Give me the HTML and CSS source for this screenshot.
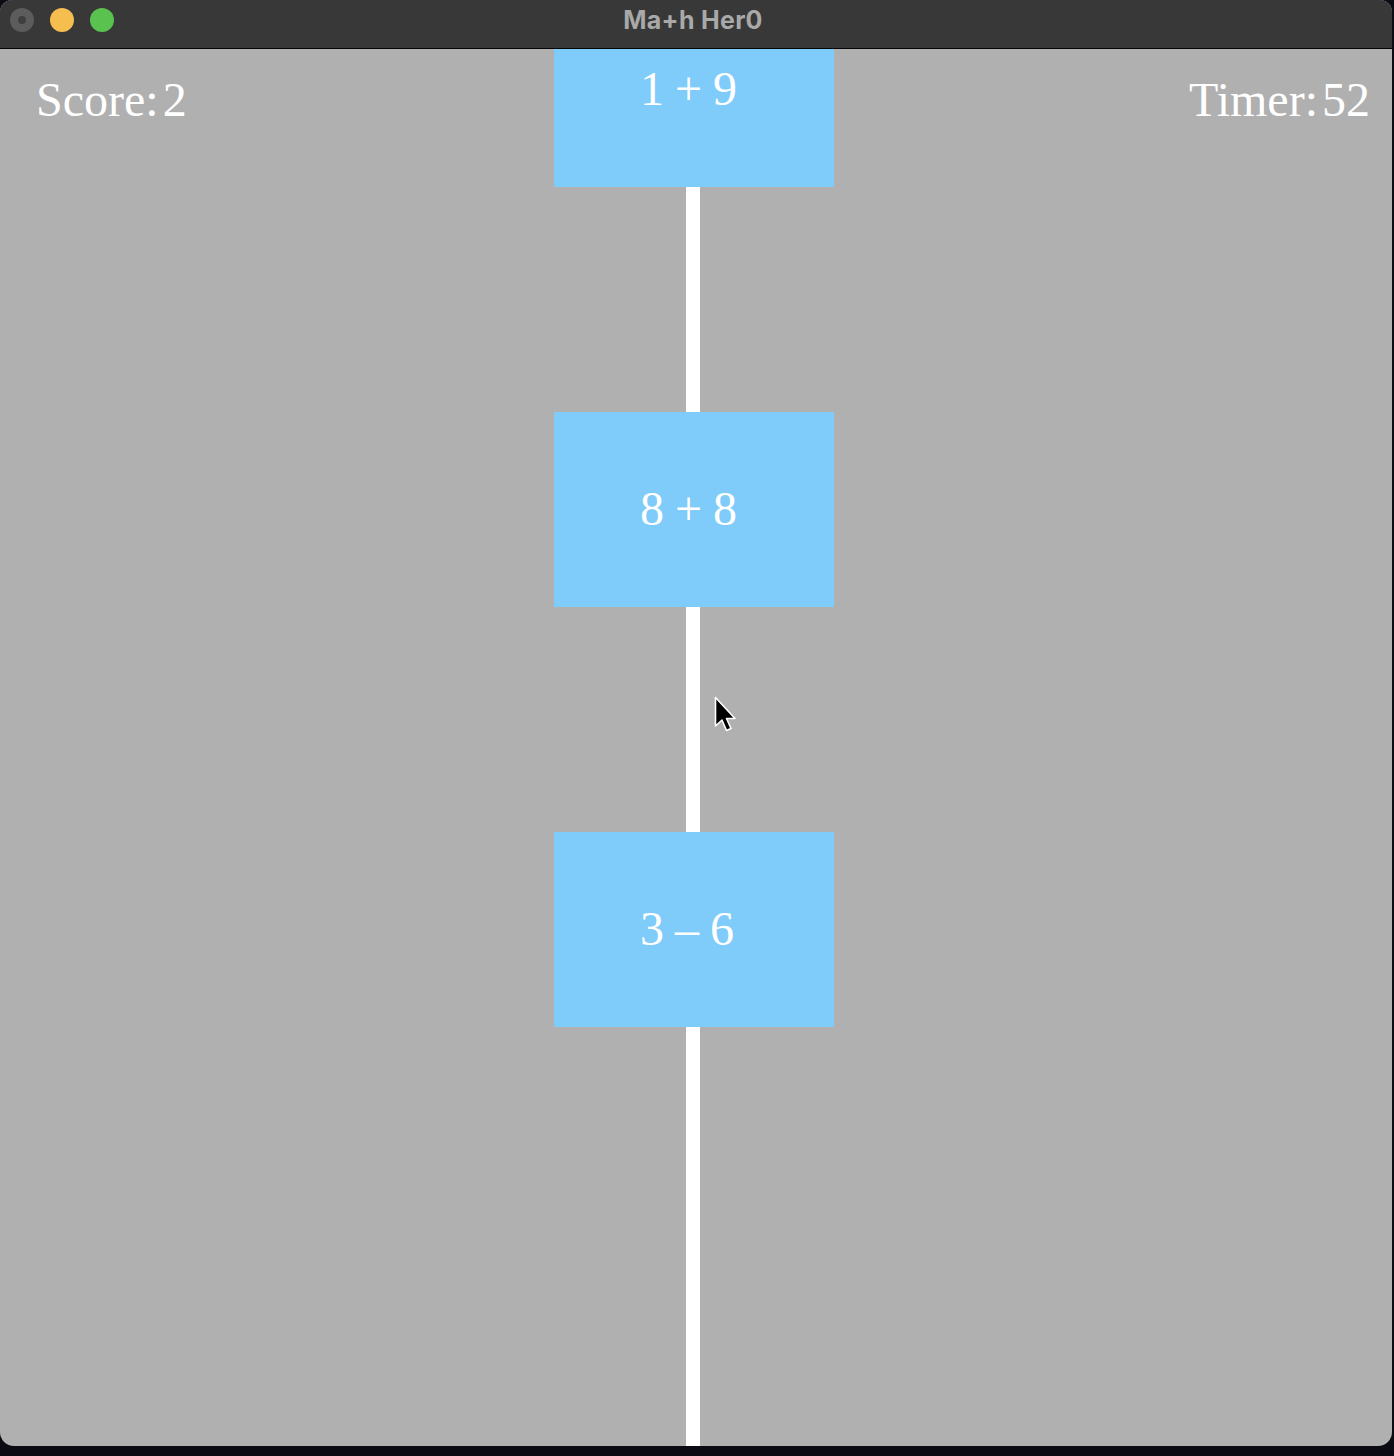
FILE: index.html
```html
<!DOCTYPE html>
<html>
<head>
<meta charset="utf-8">
<title>Ma+h Her0</title>
<link rel="stylesheet" href="styles.css">
</head>
<body>
<div class="window">
  <header class="titlebar">
    <div class="lights">
      <span class="light light-close"><span class="dot"></span></span>
      <span class="light light-min"></span>
      <span class="light light-max"></span>
    </div>
    <div class="title">Ma+h Her0</div>
  </header>
  <main class="canvas">
    <div class="hud hud-left">Score: 2</div>
    <div class="track">
      <div class="box">1 + 9</div>
      <div class="rail"></div>
      <div class="box">8 + 8</div>
      <div class="rail"></div>
      <div class="box">3 – 6</div>
      <div class="rail rail-end"></div>
    </div>
    <div class="hud hud-right">Timer: 52</div>
    <svg class="cursor" width="24" height="38" viewBox="0 0 24 38">
      <path d="M1.5 1.5 L1.5 30 L8 24 L12.5 34.5 L17 32.5 L12.5 22.5 L21 22.5 Z" fill="#000" stroke="#fff" stroke-width="1.6" stroke-linejoin="round"/>
    </svg>
  </main>
</div>
</body>
</html>
```

FILE: styles.css
```css
html, body {
  margin: 0;
  padding: 0;
  background: #0b0b14;
  width: 1394px;
  height: 1456px;
  overflow: hidden;
}

.window {
  width: 1392px;
  height: 1446px;
  display: flex;
  flex-direction: column;
  border-radius: 12px 12px 14px 14px;
  overflow: hidden;
  background: #b0b0b0;
  position: relative;
}

.titlebar {
  height: 48px;
  flex: 0 0 48px;
  background: #383838;
  border-bottom: 1px solid #050505;
  display: flex;
  align-items: center;
  justify-content: center;
  position: relative;
}

.lights {
  position: absolute;
  left: 10px;
  top: 8px;
  display: flex;
  gap: 16px;
}

.light {
  width: 24px;
  height: 24px;
  border-radius: 50%;
  display: flex;
  align-items: center;
  justify-content: center;
}

.light-close { background: #5c5c5c; }
.light-close .dot {
  width: 8px;
  height: 8px;
  border-radius: 50%;
  background: #3f3f3f;
}
.light-min { background: #f5be4f; }
.light-max { background: #5ac34f; }

.title {
  font-family: Inter, "Liberation Sans", sans-serif;
  font-weight: 700;
  font-size: 25px;
  color: #a9a9a9;
  letter-spacing: 0.3px;
  margin-top: -8px;
  margin-right: 6px;
}

.canvas {
  flex: 1;
  display: grid;
  grid-template-columns: 554px 280px 1fr;
  position: relative;
  overflow: hidden;
  font-family: "Liberation Serif", "Times New Roman", serif;
  color: #ffffff;
}

.hud {
  font-size: 48px;
  line-height: 48px;
  padding-top: 27px;
  word-spacing: -8px;
}

.hud-left {
  padding-left: 36px;
}

.hud-right {
  text-align: right;
  padding-right: 22px;
}

.track {
  display: flex;
  flex-direction: column;
  margin-top: -57px;
}

.box {
  flex: 0 0 195px;
  height: 195px;
  background: #7fcbf9;
  display: flex;
  align-items: center;
  padding-left: 86px;
  padding-bottom: 2px;
  font-size: 48px;
  line-height: 48px;
  box-sizing: border-box;
  white-space: pre;
  letter-spacing: -0.5px;
}

.rail {
  flex: 0 0 225px;
  width: 14px;
  margin-left: 132px;
  background: #ffffff;
}

.rail-end {
  flex: 1 0 225px;
}

.cursor {
  position: absolute;
  left: 714px;
  top: 647px;
}
```
